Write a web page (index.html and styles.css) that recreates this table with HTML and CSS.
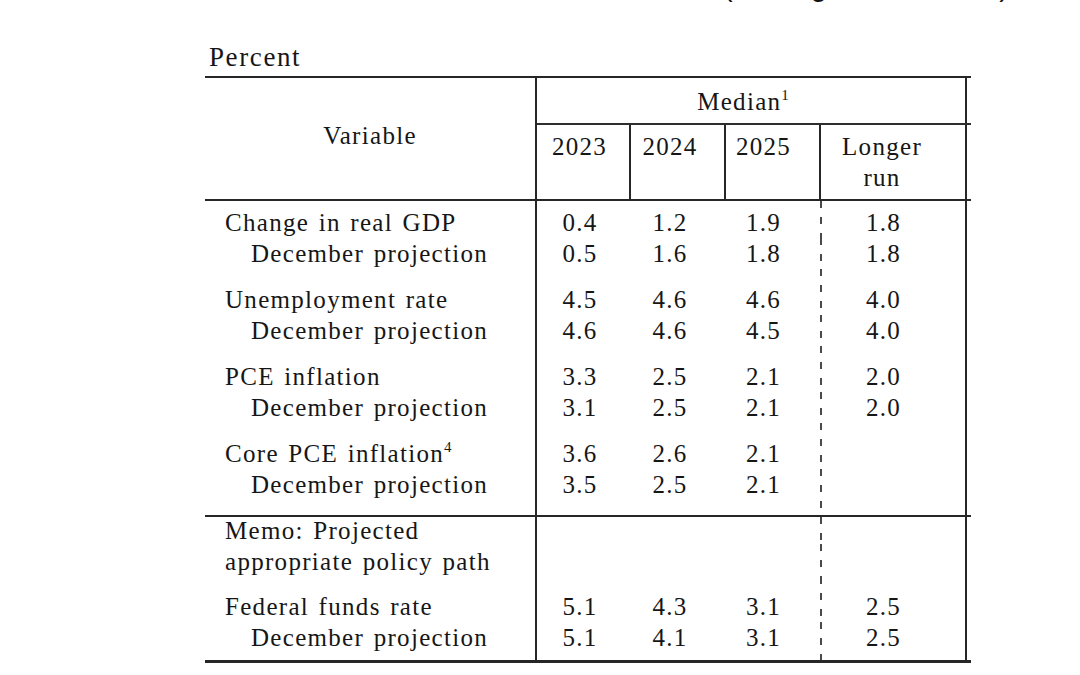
FILE: index.html
```html
<!DOCTYPE html>
<html lang="en">
<head>
<meta charset="utf-8">
<title>Economic projections</title>
<link rel="stylesheet" href="styles.css">
</head>
<body>
<div class="page">
  <div class="topline"><span>(Fed's growth outlook)</span></div>
  <div class="sheet">
    <div class="caption">Percent</div>
    <table class="proj">
      <colgroup>
        <col class="c-var">
        <col class="c-y1">
        <col class="c-y2">
        <col class="c-y3">
        <col class="c-lr">
        <col class="c-x">
      </colgroup>
      <thead>
        <tr class="h1">
          <th rowspan="2" class="var-h">Variable</th>
          <th colspan="4" class="median">Median<sup>1</sup></th>
          <th class="x"></th>
        </tr>
        <tr class="h2">
          <th class="yr y1">2023</th>
          <th class="yr y2">2024</th>
          <th class="yr y3">2025</th>
          <th class="yr lr">Longer<br>run</th>
          <th class="x"></th>
        </tr>
      </thead>
      <tbody class="grp first">
        <tr><td class="lbl">Change in real GDP</td><td class="y1">0.4</td><td class="y2">1.2</td><td class="y3">1.9</td><td class="lr">1.8</td><td class="x"></td></tr>
        <tr><td class="lbl sub">December projection</td><td class="y1">0.5</td><td class="y2">1.6</td><td class="y3">1.8</td><td class="lr">1.8</td><td class="x"></td></tr>
      </tbody>
      <tbody class="grp">
        <tr><td class="lbl">Unemployment rate</td><td class="y1">4.5</td><td class="y2">4.6</td><td class="y3">4.6</td><td class="lr">4.0</td><td class="x"></td></tr>
        <tr><td class="lbl sub">December projection</td><td class="y1">4.6</td><td class="y2">4.6</td><td class="y3">4.5</td><td class="lr">4.0</td><td class="x"></td></tr>
      </tbody>
      <tbody class="grp">
        <tr><td class="lbl">PCE inflation</td><td class="y1">3.3</td><td class="y2">2.5</td><td class="y3">2.1</td><td class="lr">2.0</td><td class="x"></td></tr>
        <tr><td class="lbl sub">December projection</td><td class="y1">3.1</td><td class="y2">2.5</td><td class="y3">2.1</td><td class="lr">2.0</td><td class="x"></td></tr>
      </tbody>
      <tbody class="grp last">
        <tr><td class="lbl">Core PCE inflation<sup>4</sup></td><td class="y1">3.6</td><td class="y2">2.6</td><td class="y3">2.1</td><td class="lr"></td><td class="x"></td></tr>
        <tr><td class="lbl sub">December projection</td><td class="y1">3.5</td><td class="y2">2.5</td><td class="y3">2.1</td><td class="lr"></td><td class="x"></td></tr>
      </tbody>
      <tbody class="memo">
        <tr class="m1"><td class="lbl">Memo: Projected</td><td class="y1"></td><td class="y2"></td><td class="y3"></td><td class="lr"></td><td class="x"></td></tr>
        <tr class="m2"><td class="lbl">appropriate policy path</td><td class="y1"></td><td class="y2"></td><td class="y3"></td><td class="lr"></td><td class="x"></td></tr>
        <tr class="m3"><td class="lbl">Federal funds rate</td><td class="y1">5.1</td><td class="y2">4.3</td><td class="y3">3.1</td><td class="lr">2.5</td><td class="x"></td></tr>
        <tr class="m4"><td class="lbl sub">December projection</td><td class="y1">5.1</td><td class="y2">4.1</td><td class="y3">3.1</td><td class="lr">2.5</td><td class="x"></td></tr>
      </tbody>
    </table>
  </div>
</div>
</body>
</html>
```

FILE: styles.css
```css
html, body {
  margin: 0;
  padding: 0;
  background: #ffffff;
}

body {
  font-family: "Liberation Serif", "Times New Roman", serif;
  color: #161616;
}

.page {
  width: 1080px;
  height: 675px;
  overflow: hidden;
}

/* heading line cut off at the very top: only descenders show */
.topline {
  height: 12px;
  overflow: hidden;
  padding-left: 723px;
  font-family: "Liberation Sans", Arial, sans-serif;
  font-weight: 400;
  font-size: 29px;
  line-height: 32px;
  color: #111111;
}

.topline span {
  display: block;
  margin-top: -30px;
  white-space: nowrap;
}

.sheet {
  margin-left: 205px;
  width: 766px;
}

.caption {
  margin-top: 30px;
  margin-bottom: 4px;
  padding-left: 4px;
  font-size: 27px;
  line-height: 30px;
  letter-spacing: 1.6px;
}

.proj {
  border-collapse: collapse;
  table-layout: fixed;
  width: 766px;
  font-size: 25px;
  line-height: 31px;
  letter-spacing: 1.3px;
  word-spacing: 2px;
  border-top: 2px solid #262626;
  border-bottom: 3px solid #262626;
}

.c-var { width: 331px; }
.c-y1 { width: 94px; }
.c-y2 { width: 95px; }
.c-y3 { width: 95px; }
.c-lr { width: 146px; }
.c-x { width: 5px; }

.proj th,
.proj td {
  padding: 0;
  font-weight: normal;
  white-space: nowrap;
}

.proj sup {
  font-size: 15px;
  line-height: 0;
  letter-spacing: 0;
  vertical-align: 10px;
}

/* header */
.proj .var-h {
  vertical-align: top;
  text-align: center;
  padding-top: 42px;
  border-right: 2px solid #262626;
  border-bottom: 2px solid #262626;
}

.proj .median {
  text-align: center;
  padding: 8px 16px 6px 0;
  border-bottom: 2px solid #2e2e2e;
  border-right: 2px solid #262626;
}

.proj .h1 .x {
  border-bottom: 2px solid #2e2e2e;
}

.proj .h2 th {
  vertical-align: top;
  text-align: center;
  padding-top: 6px;
  padding-bottom: 6px;
  border-bottom: 2px solid #262626;
}

.proj .h2 .yr {
  border-right: 2px solid #262626;
}

.proj .h2 .y1 { padding-right: 7px; }
.proj .h2 .y2 { padding-right: 15px; }
.proj .h2 .y3 { padding-right: 18px; }
.proj .h2 .lr { padding-right: 22px; }

/* body */
.proj td {
  text-align: center;
  vertical-align: top;
}

.proj td.lbl {
  text-align: left;
  padding-left: 20px;
  border-right: 2px solid #262626;
}

.proj td.lbl.sub {
  padding-left: 46px;
}

.proj td.y1 { padding-right: 7px; }
.proj td.y2 { padding-right: 15px; }
.proj td.y3 { padding-right: 18px; }

.proj td.lr {
  padding-right: 18px;
  border-right: 2px solid #262626;
  background-image: repeating-linear-gradient(to bottom, #4a4a4a 0, #4a4a4a 7px, transparent 7px, transparent 16px);
  background-size: 2px 100%;
  background-repeat: no-repeat;
  background-position: left top;
}

.proj .grp tr:first-child td {
  padding-top: 15px;
}

.proj .grp.first tr:first-child td {
  padding-top: 6px;
}

.proj .grp.last tr:last-child td {
  padding-bottom: 15px;
}

.proj .memo tr:first-child td {
  border-top: 2px solid #262626;
}

.proj .memo .m1 td {
  line-height: 27px;
}

.proj .memo .m2 td {
  padding-top: 2px;
}

.proj .memo .m3 td {
  padding-top: 14px;
}

.proj .memo .m4 td {
  padding-bottom: 7px;
}
```
